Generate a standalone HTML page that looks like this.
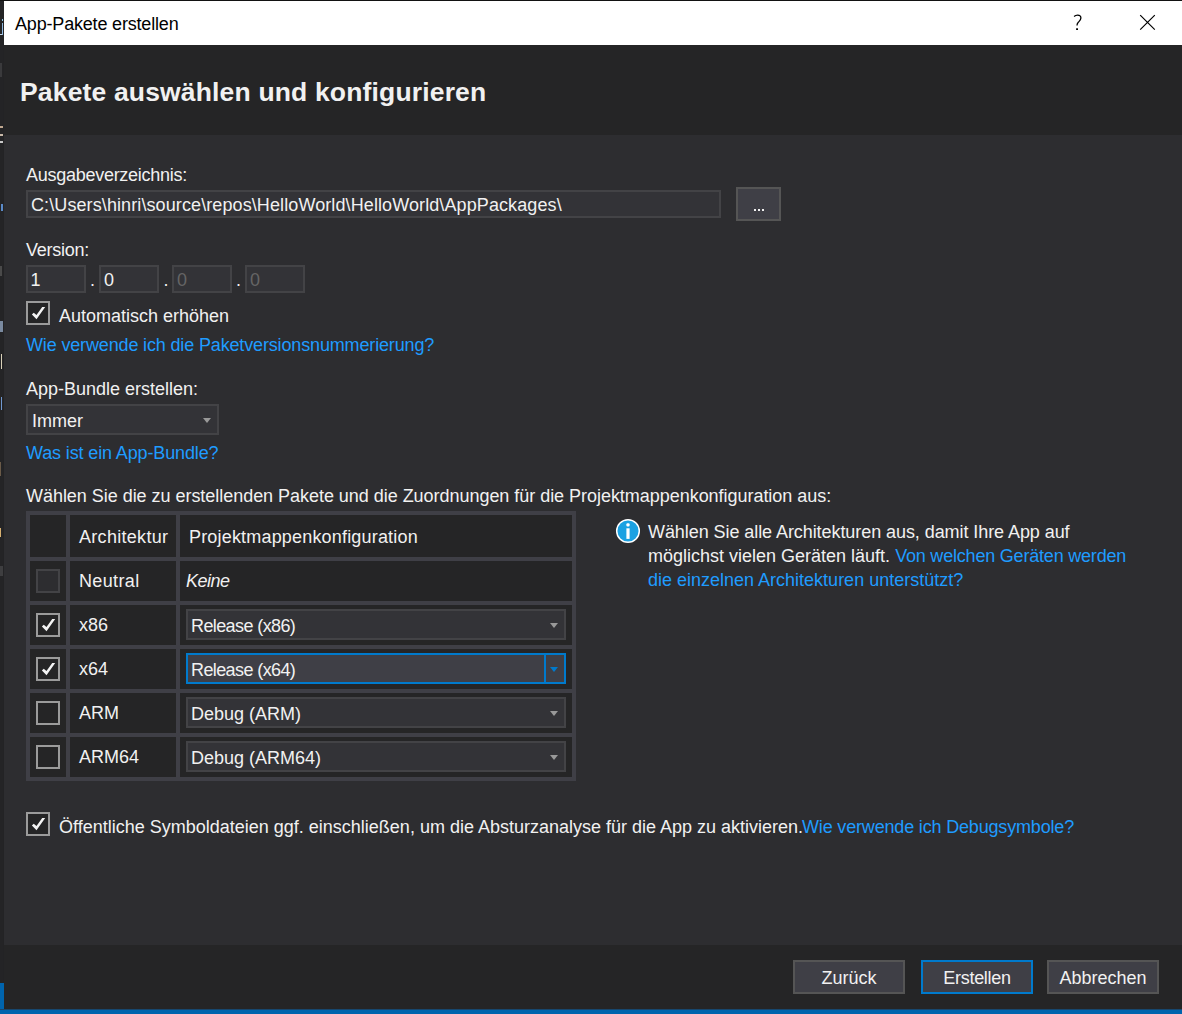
<!DOCTYPE html>
<html><head><meta charset="utf-8">
<style>
*{margin:0;padding:0;box-sizing:border-box}
html,body{width:1182px;height:1014px;overflow:hidden;background:#1e1e1e}
body{position:relative;font-family:"Liberation Sans",sans-serif;font-size:18px;color:#f1f1f1}
.a{position:absolute}
.t{position:absolute;white-space:pre;line-height:20px;font-size:18px}
.lnk{color:#1f9cff}
.box{position:absolute;background:#333337;border:2px solid #434346}
.btn{position:absolute;background:#3f3f46;border:2px solid #555555;text-align:center}
.cb{position:absolute;width:24px;height:24px;border:2px solid #9b9b9b;background:#252526}
.cb svg{position:absolute;left:-2px;top:-2px}
.cell{position:absolute;background:#252526}
.arr{position:absolute;width:0;height:0;border-left:4.5px solid transparent;border-right:4.5px solid transparent;border-top:5px solid #999999}
</style></head>
<body>
<!-- left strip of background editor -->
<div class="a" style="left:0;top:0;width:4px;height:1014px;background:#2a2a2d"></div>
<div class="a" style="left:3px;top:0;width:1px;height:1014px;background:#232325"></div>
<div class="a" style="left:0;top:0;width:3px;height:1014px;background:#242426"></div>
<div class="a" style="left:2px;top:23px;width:1px;height:12px;background:#8fb8e0"></div>
<div class="a" style="left:2px;top:19px;width:1px;height:2px;background:#8fc8e8"></div>
<div class="a" style="left:0;top:34px;width:2px;height:1px;background:#c8d8e8"></div>
<div class="a" style="left:0;top:63px;width:2px;height:14px;background:#3a3a3c"></div>
<div class="a" style="left:0;top:126px;width:3px;height:2px;background:#c0a890"></div>
<div class="a" style="left:0;top:134px;width:3px;height:2px;background:#c8b8a8"></div>
<div class="a" style="left:0;top:141px;width:3px;height:2px;background:#c8c8c8"></div>
<div class="a" style="left:1px;top:204px;width:2px;height:7px;background:#5a8ac8"></div>
<div class="a" style="left:0;top:266px;width:2px;height:10px;background:#4a4a4a"></div>
<div class="a" style="left:0;top:321px;width:3px;height:11px;background:#7a8aa0"></div>
<div class="a" style="left:1px;top:354px;width:1px;height:15px;background:#d8d0b8"></div>
<div class="a" style="left:1px;top:397px;width:1px;height:13px;background:#7098d0"></div>
<div class="a" style="left:0;top:462px;width:1px;height:14px;background:#6a5a48"></div>
<div class="a" style="left:0;top:528px;width:1px;height:9px;background:#d8b070"></div>
<div class="a" style="left:0;top:566px;width:3px;height:10px;background:#3e3e40"></div>
<div class="a" style="left:0;top:983px;width:4px;height:31px;background:#0064ad"></div>
<div class="a" style="left:0;top:1009px;width:1182px;height:1px;background:#17476e"></div>
<div class="a" style="left:0;top:1010px;width:1182px;height:4px;background:#0064ad"></div>

<!-- dialog -->
<div class="a" style="left:0;top:0;width:1182px;height:1px;background:#121212"></div>
<!-- title bar -->
<div class="a" style="left:4px;top:1px;width:1178px;height:44px;background:#ffffff"></div>
<div class="t" style="left:15px;top:14px;color:#000;letter-spacing:-0.18px">App-Pakete erstellen</div>
<svg class="a" style="left:1060px;top:5px" width="40" height="40" viewBox="0 0 40 40">
  <path d="M14.1 11.5 C15 10.6 16.3 10.1 17.6 10.1 C19.7 10.1 20.9 11.3 20.9 13.1 C20.9 15 19.5 16.1 18.3 17.3 C17.3 18.3 17 19.3 17 20.6" fill="none" stroke="#000" stroke-width="1.3"/>
  <rect x="16.1" y="23.3" width="1.9" height="1.7" fill="#000"/>
</svg>
<svg class="a" style="left:1130px;top:0" width="40" height="45" viewBox="0 0 40 45">
  <path d="M10.2 15.1 L24.8 29.6 M24.8 15.1 L10.2 29.6" stroke="#000" stroke-width="1.2" fill="none"/>
</svg>

<!-- header -->
<div class="a" style="left:4px;top:45px;width:1178px;height:90px;background:#252526"></div>
<div class="t" style="left:20px;top:78px;font-size:26.5px;font-weight:bold;line-height:28px;letter-spacing:0.16px">Pakete auswählen und konfigurieren</div>

<!-- content -->
<div class="a" style="left:4px;top:135px;width:1178px;height:810px;background:#2d2d30"></div>

<div class="t" style="left:26px;top:165px;letter-spacing:-0.27px">Ausgabeverzeichnis:</div>
<div class="box" style="left:26px;top:190px;width:695px;height:28px"></div>
<div class="t" style="left:31px;top:195px;letter-spacing:0.1px">C:\Users\hinri\source\repos\HelloWorld\HelloWorld\AppPackages\</div>
<div class="btn" style="left:736px;top:187px;width:45px;height:34px"></div>
<div class="a" style="left:754px;top:209px;width:2px;height:2px;background:#f1f1f1"></div><div class="a" style="left:758px;top:209px;width:2px;height:2px;background:#f1f1f1"></div><div class="a" style="left:762px;top:209px;width:2px;height:2px;background:#f1f1f1"></div>

<div class="t" style="left:26px;top:240px;letter-spacing:-0.25px">Version:</div>
<div class="box" style="left:26px;top:265px;width:60px;height:28px"></div>
<div class="t" style="left:30.5px;top:270px">1</div>
<div class="t" style="left:90px;top:270px">.</div>
<div class="box" style="left:99px;top:265px;width:60px;height:28px"></div>
<div class="t" style="left:104px;top:270px">0</div>
<div class="t" style="left:163.5px;top:270px">.</div>
<div class="box" style="left:172px;top:265px;width:60px;height:28px"></div>
<div class="t" style="left:177px;top:270px;color:#656565">0</div>
<div class="t" style="left:236px;top:270px">.</div>
<div class="box" style="left:245px;top:265px;width:60px;height:28px"></div>
<div class="t" style="left:250px;top:270px;color:#656565">0</div>

<div class="cb" style="left:26px;top:301px"><svg width="24" height="24" viewBox="0 0 24 24"><path d="M5.9 13.4 L7.7 11.7 L10.5 14.0 L16.2 5.9 L19.2 5.9 L10.5 18.2 Z" fill="#f4f4f4"/></svg></div>
<div class="t" style="left:59px;top:306px">Automatisch erhöhen</div>
<div class="t lnk" style="left:26px;top:335px;letter-spacing:-0.15px">Wie verwende ich die Paketversionsnummerierung?</div>

<div class="t" style="left:26px;top:379px">App-Bundle erstellen:</div>
<div class="box" style="left:26px;top:404px;width:193px;height:31px"></div>
<div class="t" style="left:32px;top:411px">Immer</div>
<div class="arr" style="left:203px;top:418px"></div>
<div class="t lnk" style="left:26px;top:443px;letter-spacing:-0.13px">Was ist ein App-Bundle?</div>

<div class="t" style="left:26px;top:486px;letter-spacing:-0.035px">Wählen Sie die zu erstellenden Pakete und die Zuordnungen für die Projektmappenkonfiguration aus:</div>

<!-- table -->
<div class="a" style="left:26px;top:511px;width:550px;height:270px;background:#3f3f46"></div>
<div class="cell" style="left:30px;top:515px;width:36px;height:42px"></div>
<div class="cell" style="left:70px;top:515px;width:106px;height:42px"></div>
<div class="cell" style="left:180px;top:515px;width:392px;height:42px"></div>
<div class="t" style="left:79px;top:527px;letter-spacing:0.3px">Architektur</div>
<div class="t" style="left:189px;top:527px;letter-spacing:0.18px">Projektmappenkonfiguration</div>

<div class="cell" style="left:30px;top:561px;width:36px;height:40px"></div>
<div class="cell" style="left:70px;top:561px;width:106px;height:40px"></div>
<div class="cell" style="left:180px;top:561px;width:392px;height:40px"></div>
<div class="cb" style="left:36px;top:569px;border-color:#434346;background:#2d2d30"></div>
<div class="t" style="left:79px;top:571px;letter-spacing:0.35px">Neutral</div>
<div class="t" style="left:186px;top:571px;font-style:italic;letter-spacing:-0.5px">Keine</div>

<div class="cell" style="left:30px;top:605px;width:36px;height:40px"></div>
<div class="cell" style="left:70px;top:605px;width:106px;height:40px"></div>
<div class="cell" style="left:180px;top:605px;width:392px;height:40px"></div>
<div class="cb" style="left:36px;top:613px"><svg width="24" height="24" viewBox="0 0 24 24"><path d="M5.9 13.4 L7.7 11.7 L10.5 14.0 L16.2 5.9 L19.2 5.9 L10.5 18.2 Z" fill="#f4f4f4"/></svg></div>
<div class="t" style="left:79px;top:615px">x86</div>
<div class="box" style="left:186px;top:609px;width:380px;height:31px"></div>
<div class="t" style="left:191px;top:616px;letter-spacing:-0.6px">Release (x86)</div>
<div class="arr" style="left:550px;top:623px"></div>

<div class="cell" style="left:30px;top:649px;width:36px;height:40px"></div>
<div class="cell" style="left:70px;top:649px;width:106px;height:40px"></div>
<div class="cell" style="left:180px;top:649px;width:392px;height:40px"></div>
<div class="cb" style="left:36px;top:657px"><svg width="24" height="24" viewBox="0 0 24 24"><path d="M5.9 13.4 L7.7 11.7 L10.5 14.0 L16.2 5.9 L19.2 5.9 L10.5 18.2 Z" fill="#f4f4f4"/></svg></div>
<div class="t" style="left:79px;top:659px">x64</div>
<div class="box" style="left:186px;top:653px;width:380px;height:31px;border-color:#007acc;background:#3f3f46"></div>
<div class="a" style="left:544px;top:653px;width:2px;height:31px;background:#007acc"></div>
<div class="t" style="left:191px;top:660px;letter-spacing:-0.6px">Release (x64)</div>
<div class="arr" style="left:550px;top:667px;border-top-color:#007acc"></div>

<div class="cell" style="left:30px;top:693px;width:36px;height:40px"></div>
<div class="cell" style="left:70px;top:693px;width:106px;height:40px"></div>
<div class="cell" style="left:180px;top:693px;width:392px;height:40px"></div>
<div class="cb" style="left:36px;top:701px"></div>
<div class="t" style="left:79px;top:703px">ARM</div>
<div class="box" style="left:186px;top:697px;width:380px;height:31px"></div>
<div class="t" style="left:191px;top:704px">Debug (ARM)</div>
<div class="arr" style="left:550px;top:711px"></div>

<div class="cell" style="left:30px;top:737px;width:36px;height:40px"></div>
<div class="cell" style="left:70px;top:737px;width:106px;height:40px"></div>
<div class="cell" style="left:180px;top:737px;width:392px;height:40px"></div>
<div class="cb" style="left:36px;top:745px"></div>
<div class="t" style="left:79px;top:747px">ARM64</div>
<div class="box" style="left:186px;top:741px;width:380px;height:31px"></div>
<div class="t" style="left:191px;top:748px">Debug (ARM64)</div>
<div class="arr" style="left:550px;top:755px"></div>

<!-- info -->
<svg class="a" style="left:614px;top:517px" width="28" height="28" viewBox="0 0 28 28">
  <circle cx="14" cy="14" r="11.3" fill="#1ba1e2" stroke="#fff" stroke-width="1.5"/>
  <rect x="12.4" y="6.2" width="3.2" height="3.3" rx="1.1" fill="#fff"/>
  <rect x="12.4" y="11.3" width="3.2" height="10.6" fill="#fff"/>
</svg>
<div class="t" style="left:648px;top:522px;letter-spacing:-0.07px">Wählen Sie alle Architekturen aus, damit Ihre App auf</div>
<div class="t" style="left:648px;top:546px">möglichst vielen Geräten läuft. <span class="lnk" style="letter-spacing:-0.2px">Von welchen Geräten werden</span></div>
<div class="t lnk" style="left:648px;top:570px">die einzelnen Architekturen unterstützt?</div>

<div class="cb" style="left:26px;top:812px"><svg width="24" height="24" viewBox="0 0 24 24"><path d="M5.9 13.4 L7.7 11.7 L10.5 14.0 L16.2 5.9 L19.2 5.9 L10.5 18.2 Z" fill="#f4f4f4"/></svg></div>
<div class="t" style="left:59px;top:817px">Öffentliche Symboldateien ggf. einschließen, um die Absturzanalyse für die App zu aktivieren.</div>
<div class="t lnk" style="left:802px;top:817px;letter-spacing:-0.17px">Wie verwende ich Debugsymbole?</div>

<!-- footer -->
<div class="a" style="left:4px;top:945px;width:1178px;height:64px;background:#252526"></div>
<div class="btn" style="left:793px;top:960px;width:112px;height:34px"></div>
<div class="t" style="left:793px;width:112px;text-align:center;top:968px">Zurück</div>
<div class="btn" style="left:921px;top:960px;width:112px;height:34px;border-color:#007acc"></div>
<div class="t" style="left:921px;width:112px;text-align:center;top:968px;letter-spacing:-0.3px">Erstellen</div>
<div class="btn" style="left:1047px;top:960px;width:112px;height:34px"></div>
<div class="t" style="left:1047px;width:112px;text-align:center;top:968px">Abbrechen</div>
</body></html>
